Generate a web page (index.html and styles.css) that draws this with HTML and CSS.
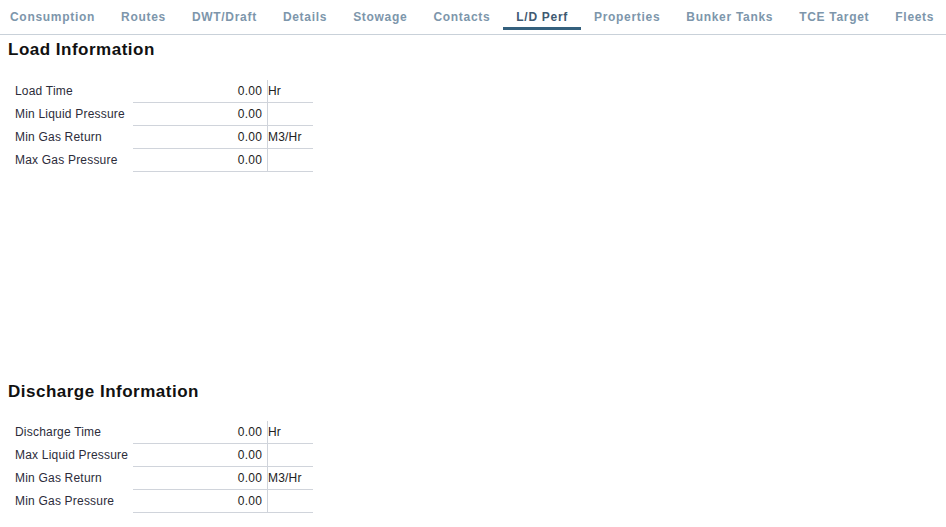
FILE: index.html
```html
<!DOCTYPE html>
<html lang="en">
<head>
    <meta charset="UTF-8">
    <meta name="viewport" content="width=device-width, initial-scale=1.0">
    <title>L/D Perf</title>
    <link rel="stylesheet" href="styles.css">
</head>
<body>
    <div class="tabs">
        <div class="tab">Consumption</div>
        <div class="tab">Routes</div>
        <div class="tab">DWT/Draft</div>
        <div class="tab">Details</div>
        <div class="tab">Stowage</div>
        <div class="tab">Contacts</div>
        <div class="tab active">L/D Perf</div>
        <div class="tab">Properties</div>
        <div class="tab">Bunker Tanks</div>
        <div class="tab">TCE Target</div>
        <div class="tab">Fleets</div>
    </div>

    <div class="section load">
        <h2>Load Information</h2>
        <table class="perf">
            <tr><td class="label">Load Time</td><td class="value">0.00</td><td class="unit">Hr</td></tr>
            <tr><td class="label">Min Liquid Pressure</td><td class="value">0.00</td><td class="unit"></td></tr>
            <tr><td class="label">Min Gas Return</td><td class="value">0.00</td><td class="unit">M3/Hr</td></tr>
            <tr><td class="label">Max Gas Pressure</td><td class="value">0.00</td><td class="unit"></td></tr>
        </table>
    </div>

    <div class="section discharge">
        <h2>Discharge Information</h2>
        <table class="perf">
            <tr><td class="label">Discharge Time</td><td class="value">0.00</td><td class="unit">Hr</td></tr>
            <tr><td class="label">Max Liquid Pressure</td><td class="value">0.00</td><td class="unit"></td></tr>
            <tr><td class="label">Min Gas Return</td><td class="value">0.00</td><td class="unit">M3/Hr</td></tr>
            <tr><td class="label">Min Gas Pressure</td><td class="value">0.00</td><td class="unit"></td></tr>
        </table>
    </div>
</body>
</html>
```

FILE: styles.css
```css
body {
    font-family: "Liberation Sans", Arial, sans-serif;
    background-color: #fff;
    color: #222;
    margin: 0;
    padding: 0;
}
.tabs {
    display: flex;
    padding: 0 0 4px 0;
    margin-left: -3px;
    border-bottom: 1px solid #c9d1d9;
}
.tab {
    padding: 10px 13px 3px 13px;
    font-size: 12px;
    line-height: 14px;
    font-weight: bold;
    letter-spacing: 0.7px;
    color: #7d96ab;
    border-bottom: 3px solid transparent;
    white-space: nowrap;
}
.tab.active {
    color: #3f5a72;
    border-bottom-color: #34607d;
}
.section {
    padding: 0 8px;
}
.section h2 {
    margin: 5px 0 0 0;
    font-size: 17px;
    line-height: 20px;
    letter-spacing: 0.5px;
    color: #111;
}
.section.load {
    margin-bottom: 210px;
}
.perf {
    margin-top: 20px;
    border-collapse: collapse;
    font-size: 12px;
    letter-spacing: 0.2px;
}
.discharge .perf {
    margin-top: 19px;
}
.perf td {
    height: 22px;
    padding: 0;
    line-height: 14px;
}
.perf .label {
    width: 118px;
    padding-left: 7px;
    color: #2c2c3a;
    white-space: nowrap;
}
.perf .value {
    width: 129px;
    padding-right: 5px;
    text-align: right;
    border-bottom: 1px solid #d0d4db;
}
.perf .unit {
    width: 45px;
    padding-left: 0;
    border-left: 1px solid #d0d4db;
    border-bottom: 1px solid #d0d4db;
}
```
